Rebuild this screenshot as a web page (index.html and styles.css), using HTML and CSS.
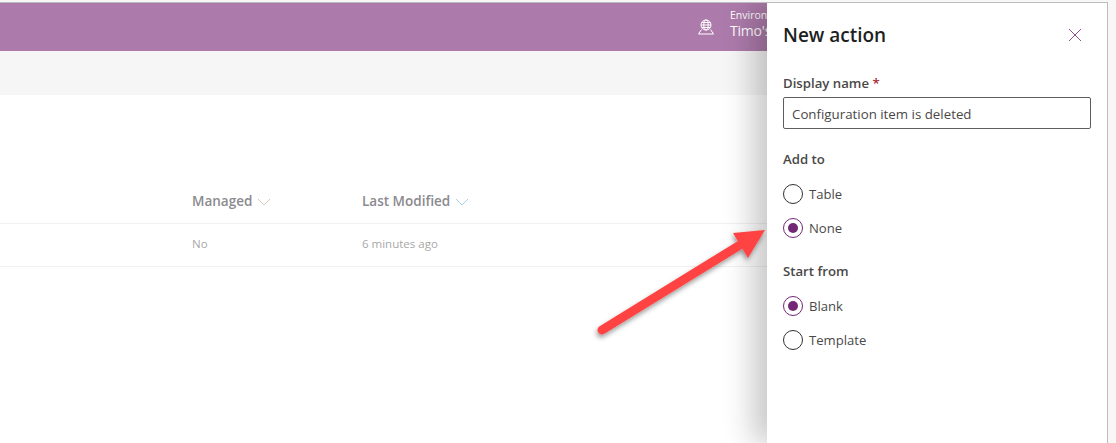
FILE: index.html
```html
<!DOCTYPE html>
<html lang="en">
<head>
    <meta charset="UTF-8">
    <meta name="viewport" content="width=device-width, initial-scale=1.0">
    <title>New action</title>
    <link rel="stylesheet" href="styles.css">
</head>
<body>
    <div class="page">
        <div class="backdrop">
            <header class="top-bar">
                <svg class="env-icon" width="18" height="16" viewBox="0 0 18 16" fill="none" stroke="#fff" stroke-width="1">
                    <circle cx="9" cy="6" r="5"/>
                    <ellipse cx="9" cy="6" rx="2.200" ry="5"/>
                    <path d="M4 6h10M4.800 3.500h8.400M4.800 8.500h8.400M4.500 10.500 1.500 15h15l-3-4.500"/>
                </svg>
                <div class="env-text">
                    <div class="env-label">Environ</div>
                    <div class="env-name">Timo's</div>
                </div>
            </header>
            <div class="command-bar"></div>
            <div class="list">
                <div class="list-row list-head">
                    <div class="col-managed">Managed
                        <svg class="chevron chevron-warm" width="14" height="8" viewBox="0 0 14 8"><path d="M1 1l6 6 6-6" fill="none" stroke="currentColor"/></svg>
                    </div>
                    <div class="col-modified">Last Modified
                        <svg class="chevron chevron-cool" width="14" height="8" viewBox="0 0 14 8"><path d="M1 1l6 6 6-6" fill="none" stroke="currentColor"/></svg>
                    </div>
                </div>
                <div class="list-row list-item">
                    <div class="col-managed">No</div>
                    <div class="col-modified">6 minutes ago</div>
                </div>
            </div>
        </div>

        <aside class="panel">
            <div class="panel-head">
                <h2>New action</h2>
                <svg class="close" width="14" height="14" viewBox="0 0 14 14"><path d="M1 1l12 12M13 1 1 13" fill="none" stroke="#8f4f8f"/></svg>
            </div>
            <label class="field-label" for="displayName">Display name <span class="required">*</span></label>
            <input class="text-input" id="displayName" type="text" value="Configuration item is deleted">

            <div class="group-label group-add">Add to</div>
            <div class="radio"><span class="dot"></span>Table</div>
            <div class="radio checked"><span class="dot"></span>None</div>

            <div class="group-label group-start">Start from</div>
            <div class="radio checked"><span class="dot"></span>Blank</div>
            <div class="radio"><span class="dot"></span>Template</div>
        </aside>

        <svg class="arrow" width="190" height="130" viewBox="0 0 190 130">
            <defs>
                <filter id="arrowShadow" x="-20%" y="-20%" width="140%" height="150%">
                    <feDropShadow dx="-1" dy="3" stdDeviation="2.500" flood-color="#000" flood-opacity="0.4"/>
                </filter>
            </defs>
            <g filter="url(#arrowShadow)">
                <path d="M12 113 150 28" stroke="#ff4242" stroke-width="9" stroke-linecap="round" fill="none"/>
                <path d="M175 13 143 16 158 41Z" fill="#ff4242"/>
            </g>
        </svg>
    </div>
</body>
</html>
```

FILE: styles.css
```css
* {
    box-sizing: border-box;
}
body {
    margin: 0;
    font-family: "Open Sans", "Noto Sans", Arial, sans-serif;
    background-color: #f7f7f7;
    color: #323130;
}
.page {
    width: 1108px;
    height: 441px;
    margin-top: 2px;
    display: flex;
    justify-content: flex-end;
    overflow: hidden;
    position: relative;
    background-color: #fff;
    border-top: 1px solid #bdbbbd;
    border-right: 1px solid #bdbbbd;
}
.backdrop {
    position: absolute;
    left: 0;
    top: 0;
    right: 0;
    bottom: 0;
}
.top-bar {
    height: 48px;
    background-color: #ad7bab;
    display: flex;
    align-items: center;
    padding-left: 697px;
    color: #fff;
}
.env-icon {
    margin-right: 15px;
}
.env-text {
    white-space: nowrap;
    margin-bottom: 6px;
}
.env-label {
    font-size: 10.500px;
    line-height: 13px;
}
.env-name {
    font-size: 14px;
    line-height: 18px;
    letter-spacing: -0.2px;
}
.command-bar {
    height: 44px;
    background-color: #f6f6f6;
}
.list {
    padding-top: 84px;
}
.list-row {
    display: flex;
    padding-left: 192px;
    border-bottom: 1px solid #f1f1f1;
}
.list-head {
    height: 45px;
    font-size: 13.500px;
    font-weight: 600;
    color: #8a8a8f;
    line-height: 44px;
}
.list-item {
    height: 43px;
    font-size: 11.500px;
    color: #a8a8a8;
    line-height: 40px;
}
.col-managed {
    width: 170px;
}
.chevron {
    margin-left: 1px;
}
.chevron-warm {
    color: #d9c4b8;
}
.chevron-cool {
    color: #a9d0e4;
}
.panel {
    position: relative;
    width: 340px;
    background-color: #fff;
    padding: 0 16px;
    box-shadow: -14px 0 28px rgba(0, 0, 0, 0.22);
}
.panel-head {
    display: flex;
    justify-content: space-between;
    align-items: center;
    height: 64px;
}
.panel-head h2 {
    margin: 0;
    font-size: 19px;
    font-weight: 600;
    color: #201f1e;
}
.close {
    margin-right: 9px;
}
.field-label, .group-label {
    display: block;
    font-size: 13.200px;
    font-weight: 600;
    color: #4a4948;
    line-height: 20px;
}
.field-label {
    margin-top: 6px;
}
.required {
    color: #a4262c;
}
.text-input {
    display: block;
    width: 308px;
    height: 32px;
    margin-top: 4px;
    padding: 2px 8px 0;
    border: 1px solid #605e5c;
    border-radius: 2px;
    font: inherit;
    font-size: 13.300px;
    color: #4a4948;
}
.group-add {
    margin-top: 20px;
}
.group-start {
    margin-top: 16px;
}
.radio {
    display: flex;
    align-items: center;
    height: 34px;
    font-size: 13.100px;
    color: #4a4948;
}
.group-add + .radio {
    margin-top: 8px;
}
.group-start + .radio {
    margin-top: 8px;
}
.dot {
    width: 20px;
    height: 20px;
    margin-right: 6px;
    border: 1px solid #323130;
    border-radius: 50%;
    display: flex;
    align-items: center;
    justify-content: center;
}
.checked .dot {
    border-color: #742774;
}
.checked .dot::after {
    content: "";
    width: 10px;
    height: 10px;
    border-radius: 50%;
    background-color: #742774;
}
.arrow {
    position: absolute;
    left: 590px;
    top: 214px;
}
```
